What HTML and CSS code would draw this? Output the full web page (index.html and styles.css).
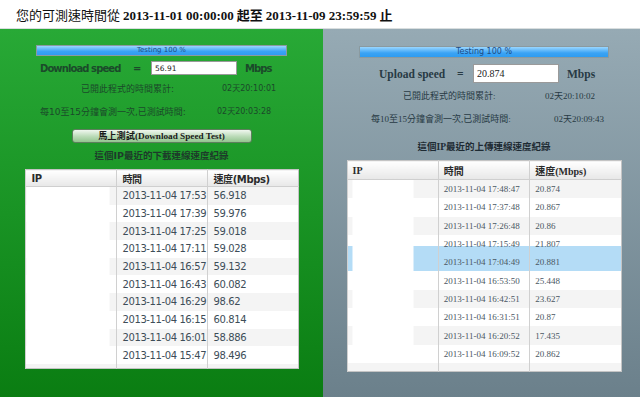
FILE: index.html
```html
<!DOCTYPE html>
<html lang="zh-Hant">
<head>
    <meta charset="UTF-8">
    <title>測速紀錄</title>
    <link rel="stylesheet" href="styles.css">
</head>
<body>
    <div class="title">您的可測速時間從 <b>2013-11-01 00:00:00</b> <b>起至</b> <b>2013-11-09 23:59:59</b> <b>止</b></div>

    <div class="panels">
        <div class="panel download">
            <div class="progress">Testing 100 %</div>
            <div class="speed">
                <span class="speed-label">Download speed</span>
                <span>=</span>
                <input class="speed-value" type="text" value="56.91" readonly>
                <span>Mbps</span>
            </div>
            <div class="stat stat-run"><span>已開此程式的時間累計:</span><span class="stat-value">02天20:10:01</span></div>
            <div class="stat stat-test"><span>每10至15分鐘會測一次,已測試時間:</span><span class="stat-value">02天20:03:28</span></div>
            <button class="test-button">馬上測試(Download Speed Test)</button>
            <div class="caption">這個IP最近的下載連線速度紀錄</div>
            <table class="log">
                <thead>
                    <tr><th>IP</th><th>時間</th><th>速度(Mbps)</th></tr>
                </thead>
                <tbody>
                    <tr><td class="ip"></td><td>2013-11-04 17:53</td><td>56.918</td></tr>
                    <tr><td class="ip"></td><td>2013-11-04 17:39</td><td>59.976</td></tr>
                    <tr><td class="ip"></td><td>2013-11-04 17:25</td><td>59.018</td></tr>
                    <tr><td class="ip"></td><td>2013-11-04 17:11</td><td>59.028</td></tr>
                    <tr><td class="ip"></td><td>2013-11-04 16:57</td><td>59.132</td></tr>
                    <tr><td class="ip"></td><td>2013-11-04 16:43</td><td>60.082</td></tr>
                    <tr><td class="ip"></td><td>2013-11-04 16:29</td><td>98.62</td></tr>
                    <tr><td class="ip"></td><td>2013-11-04 16:15</td><td>60.814</td></tr>
                    <tr><td class="ip"></td><td>2013-11-04 16:01</td><td>58.886</td></tr>
                    <tr><td class="ip"></td><td>2013-11-04 15:47</td><td>98.496</td></tr>
                    <tr class="tail"><td></td><td></td><td></td></tr>
                </tbody>
            </table>
        </div>

        <div class="panel upload">
            <div class="progress">Testing 100 %</div>
            <div class="speed">
                <span class="speed-label">Upload speed</span>
                <span>=</span>
                <input class="speed-value" type="text" value="20.874" readonly>
                <span>Mbps</span>
            </div>
            <div class="stat stat-run"><span>已開此程式的時間累計:</span><span class="stat-value">02天20:10:02</span></div>
            <div class="stat stat-test"><span>每10至15分鐘會測一次,已測試時間:</span><span class="stat-value">02天20:09:43</span></div>
            <div class="caption">這個IP最近的上傳連線速度紀錄</div>
            <table class="log">
                <thead>
                    <tr><th>IP</th><th>時間</th><th>速度(Mbps)</th></tr>
                </thead>
                <tbody>
                    <tr><td class="ip"></td><td>2013-11-04 17:48:47</td><td>20.874</td></tr>
                    <tr><td class="ip"></td><td>2013-11-04 17:37:48</td><td>20.867</td></tr>
                    <tr><td class="ip"></td><td>2013-11-04 17:26:48</td><td>20.86</td></tr>
                    <tr class="half"><td class="ip"></td><td>2013-11-04 17:15:49</td><td>21.807</td></tr>
                    <tr class="selected"><td class="ip"></td><td>2013-11-04 17:04:49</td><td>20.881</td></tr>
                    <tr><td class="ip"></td><td>2013-11-04 16:53:50</td><td>25.448</td></tr>
                    <tr><td class="ip"></td><td>2013-11-04 16:42:51</td><td>23.627</td></tr>
                    <tr><td class="ip"></td><td>2013-11-04 16:31:51</td><td>20.87</td></tr>
                    <tr><td class="ip"></td><td>2013-11-04 16:20:52</td><td>17.435</td></tr>
                    <tr><td class="ip"></td><td>2013-11-04 16:09:52</td><td>20.862</td></tr>
                    <tr class="tail"><td></td><td></td><td></td></tr>
                </tbody>
            </table>
        </div>
    </div>
</body>
</html>
```

FILE: styles.css
```css
body {
    margin: 0;
    background-color: #fff;
    font-family: "Liberation Serif", "Noto Sans CJK TC", serif;
    overflow: hidden;
}

.title {
    height: 28px;
    padding-left: 16px;
    padding-top: 3px;
    box-sizing: border-box;
    font-size: 13px;
    line-height: 24px;
    color: #111;
    font-family: "Noto Sans CJK TC", sans-serif;
}

.title b {
    font-family: "Liberation Serif", "Noto Sans CJK TC", serif;
}

.panels {
    display: grid;
    grid-template-columns: 323px 1fr;
    height: 369px;
    border-top: 1px solid #d9dedf;
}

.panel {
    display: flex;
    flex-direction: column;
    align-items: center;
}

.download {
    background: linear-gradient(to bottom, #28a936, #0a7d12);
    padding-top: 16px;
    font-family: "DejaVu Sans", "Noto Sans CJK TC", sans-serif;
    color: #1b4a2a;
}

.upload {
    background: linear-gradient(to bottom, #96aab4, #6b808b);
    padding-top: 17px;
    padding-left: 5px;
    color: #283a44;
}

/* progress bar */
.progress {
    box-sizing: border-box;
    border: 1px solid #8a9aa0;
    background: linear-gradient(to bottom, #9ad6ff, #3aa3f5 60%, #2f9cf0);
    color: #1d4c86;
    text-align: center;
    font-family: "DejaVu Sans", sans-serif;
}

.download .progress {
    width: 251px;
    height: 11px;
    font-size: 7px;
    line-height: 9px;
}

.upload .progress {
    width: 250px;
    height: 12px;
    font-size: 8px;
    line-height: 10px;
}

/* speed line */
.speed {
    align-self: stretch;
    display: grid;
    align-items: center;
    font-weight: bold;
}

.download .speed {
    grid-template-columns: 93px 18px 94px auto;
    padding-left: 40px;
    margin-top: 5px;
    height: 14px;
    font-size: 10px;
    letter-spacing: -0.9px;
}

.upload .speed {
    grid-template-columns: 78px 16px 94px auto;
    padding-left: 51px;
    margin-top: 6px;
    height: 19px;
    font-size: 11.5px;
}

.speed-value {
    box-sizing: border-box;
    width: 86px;
    margin: 0;
    padding: 0 3px;
    border: 1px solid #9a9a9a;
    background: #fff;
    color: #222;
    letter-spacing: 0;
}

.download .speed-value {
    height: 14px;
    font-family: "DejaVu Sans", sans-serif;
    font-size: 7.5px;
}

.upload .speed-value {
    height: 19px;
    font-family: "Liberation Serif", serif;
    font-size: 10px;
}

/* counters */
.stat {
    align-self: stretch;
    display: grid;
    height: 12px;
    line-height: 12px;
    font-size: 9px;
}

.stat-value {
    font-size: 8px;
}

.download .stat-run {
    grid-template-columns: 141px auto;
    padding-left: 81px;
    margin-top: 8px;
}

.download .stat-test {
    grid-template-columns: 177px auto;
    padding-left: 40px;
    margin-top: 11px;
}

.upload .stat-run {
    grid-template-columns: 142px auto;
    padding-left: 75px;
    margin-top: 7px;
}

.upload .stat-test {
    grid-template-columns: 183px auto;
    padding-left: 43px;
    margin-top: 11px;
}

.upload .stat-value {
    font-size: 9px;
}

.test-button {
    width: 180px;
    height: 14px;
    margin-top: 11px;
    padding: 0;
    border: 1px solid #5d7f5d;
    border-radius: 3px;
    background: linear-gradient(to bottom, #f0f7ef, #b9dab6 55%, #93c48f);
    font-family: "Liberation Serif", "Noto Sans CJK TC", serif;
    font-size: 9.2px;
    font-weight: bold;
    line-height: 12px;
    color: #1a1a1a;
}

.caption {
    height: 12px;
    line-height: 12px;
    font-size: 9.5px;
    font-weight: bold;
    color: #1d3a2a;
}

.download .caption {
    margin-top: 7px;
}

.upload .caption {
    margin-top: 16px;
    color: #1e2b33;
}

/* history table */
.log {
    border-collapse: collapse;
    background: #fff;
    border: 1px solid #c4c4c4;
    margin-top: 7px;
    table-layout: fixed;
}

.download .log {
    width: 274px;
    font-size: 10px;
    letter-spacing: -0.4px;
    color: #3d4d58;
}

.upload .log {
    width: 275px;
    font-size: 9px;
    color: #4a5763;
}

.log th {
    text-align: left;
    font-weight: bold;
    color: #2b2b2b;
    background: linear-gradient(to bottom, #fff, #e7e7e7);
    border-left: 1px solid #d0d0d0;
    border-bottom: 1px solid #cfcfcf;
    padding: 0 6px;
}

.download .log th {
    height: 16px;
}

.upload .log th {
    height: 18px;
    font-size: 10px;
    padding: 0 5px;
}

.log td {
    border-left: 1px solid #d0d0d0;
    padding: 0 6px;
    white-space: nowrap;
}

.upload .log td {
    padding: 0 5px;
}

.download .log td {
    height: 17.7px;
}

.upload .log td {
    height: 18.3px;
}

.log tbody tr:nth-child(odd) td {
    background-color: #f4f4f4;
}

/* the address column is blanked out */
.download .log td.ip {
    background-image: linear-gradient(to right, transparent 1px, #fff 1px, #fff 84px, transparent 84px);
}

.upload .log td.ip {
    background-image: linear-gradient(to right, transparent 5px, #fff 5px, #fff 66px, transparent 66px);
}

.upload .log tr.half td {
    background-image: linear-gradient(to bottom, #fff 62%, #b4dcf6 62%);
}

.upload .log tr.half td.ip {
    background-image: linear-gradient(to right, transparent 5px, #fff 5px, #fff 66px, transparent 66px),
        linear-gradient(to bottom, #fff 62%, #b4dcf6 62%);
}

.upload .log tr.selected td {
    background-color: #b4dcf6;
}

.download .log tr.tail td {
    height: 4px;
}

.upload .log tr.tail td {
    height: 8px;
}
```
